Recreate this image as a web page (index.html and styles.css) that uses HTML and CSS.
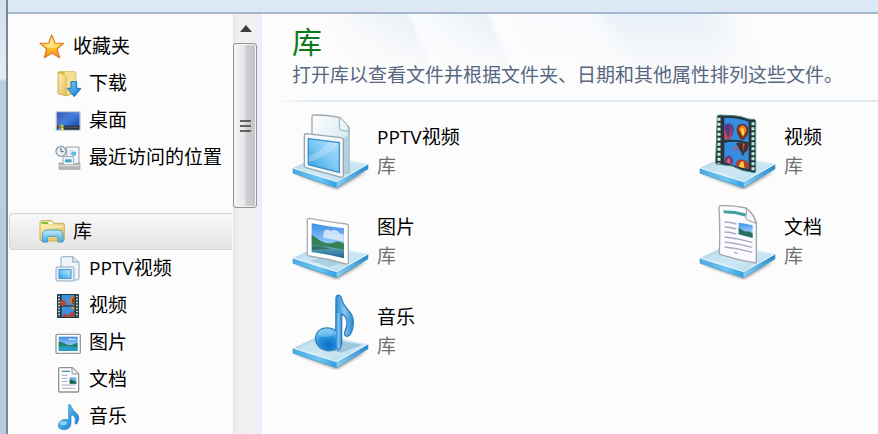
FILE: index.html
```html
<!DOCTYPE html>
<html lang="zh-CN">
<head>
  <meta charset="UTF-8" />
  <meta name="viewport" content="width=device-width, initial-scale=1.0"/>
  <title>库</title>
  <link rel="stylesheet" href="styles.css">
</head>
<body>
  <!-- shared gradients and the library stand -->
  <svg class="defs" aria-hidden="true">
    <defs>
      <linearGradient id="g-star" x1="0" y1="0" x2="0" y2="1"><stop offset="0" stop-color="#ffe58a"/><stop offset=".5" stop-color="#ffc928"/><stop offset="1" stop-color="#f08a1c"/></linearGradient>
      <linearGradient id="g-folder" x1="0" y1="0" x2="1" y2="1"><stop offset="0" stop-color="#fdf2b8"/><stop offset="1" stop-color="#dfbf58"/></linearGradient>
      <linearGradient id="g-blue" x1="0" y1="0" x2="1" y2="1"><stop offset="0" stop-color="#79d0fa"/><stop offset="1" stop-color="#0a78cf"/></linearGradient>
      <linearGradient id="g-desk" x1="0" y1="0" x2="1" y2="1"><stop offset="0" stop-color="#1b3f9c"/><stop offset=".5" stop-color="#3d79dc"/><stop offset="1" stop-color="#16409c"/></linearGradient>
      <linearGradient id="g-arch" x1="0" y1="0" x2="0" y2="1"><stop offset="0" stop-color="#c4ecfb"/><stop offset="1" stop-color="#3fa9e0"/></linearGradient>
      <linearGradient id="g-screen" x1="0" y1="1" x2="1" y2="0"><stop offset="0" stop-color="#2e9ae6"/><stop offset=".5" stop-color="#7cc8f5"/><stop offset="1" stop-color="#b9e3fb"/></linearGradient>
      <linearGradient id="g-sky" x1="0" y1="0" x2="0" y2="1"><stop offset="0" stop-color="#3c8fe8"/><stop offset="1" stop-color="#d7f1fc"/></linearGradient>
      <linearGradient id="g-sea" x1="0" y1="0" x2="0" y2="1"><stop offset="0" stop-color="#69b1bd"/><stop offset="1" stop-color="#20648f"/></linearGradient>
      <linearGradient id="g-page" x1="0" y1="0" x2="1" y2="1"><stop offset="0" stop-color="#ffffff"/><stop offset="1" stop-color="#c5e0ec"/></linearGradient>
      <linearGradient id="g-top" x1="0" y1="0" x2="1" y2="1"><stop offset="0" stop-color="#9cc9e3"/><stop offset=".5" stop-color="#d9edf8"/><stop offset="1" stop-color="#a7d3ec"/></linearGradient>
      <linearGradient id="g-left" x1="0" y1="0" x2="1" y2="0"><stop offset="0" stop-color="#4ba8dc"/><stop offset=".6" stop-color="#71c7f4"/><stop offset="1" stop-color="#2f9fe2"/></linearGradient>
      <linearGradient id="g-right" x1="0" y1="1" x2="1" y2="0"><stop offset="0" stop-color="#8fd2f5"/><stop offset="1" stop-color="#2385c6"/></linearGradient>
      <linearGradient id="g-note" x1="0" y1="0" x2="1" y2="0"><stop offset="0" stop-color="#2b8ad2"/><stop offset=".5" stop-color="#86c9f4"/><stop offset="1" stop-color="#2784cd"/></linearGradient>
      <radialGradient id="g-head" cx=".6" cy=".75" r=".8"><stop offset="0" stop-color="#0b6fc6"/><stop offset=".5" stop-color="#2592df"/><stop offset="1" stop-color="#9cd6f7"/></radialGradient>
      <filter id="f-soft" x="-20%" y="-20%" width="140%" height="140%"><feGaussianBlur stdDeviation="4"/></filter>
      <symbol id="stand" viewBox="0 0 234 234">
        <path d="M8 186 L134 232 L226 178 L134 205Z" fill="#000" opacity=".4" filter="url(#f-soft)"/>
        <path d="M3 169 L134 210 V227 L3 184Z" fill="url(#g-left)"/>
        <path d="M134 210 L228 157 V171 L134 227Z" fill="url(#g-right)"/>
        <path d="M3 168 L88 128 L228 156 L134 209Z" fill="url(#g-top)"/>
        <path d="M20 168 L88 136 L206 158 L133 198Z" fill="#c6e2f1" opacity=".7"/>
        <path d="M3 168 L134 209 L228 156" fill="none" stroke="#e6f6fd" stroke-width="3"/>
        <path d="M3 169 V184 L134 227 L228 171 V157" fill="none" stroke="#4a9bc9" stroke-width="2"/>
      </symbol>
    </defs>
  </svg>

  <div class="window">
    <div class="frame"></div>
    <div class="client">
      <div class="toolbar"></div>
      <div class="panes">
        <nav class="sidebar">
          <div class="group">
            <a class="item" href="#">
              <svg class="icon" viewBox="0 0 78 78"><path d="M38 3 L48 27 L74 28 L54 45 L62 71 L39 57 L16 71 L23 45 L3 28 L29 27Z" fill="url(#g-star)" stroke="#dd7a2c" stroke-width="3.5" stroke-linejoin="round"/><path d="M38 12 L45 31 L62 33 L46 43 L28 41 L13 32 L31 31Z" fill="#fff0a8" opacity=".65"/></svg>
              <span>收藏夹</span>
            </a>
            <a class="item child" href="#">
              <svg class="icon" viewBox="0 0 78 78"><path d="M9 6 Q9 2 13 2 H58 Q63 2 63 7 V66 L34 74 L9 68Z" fill="#d9b956" stroke="#c6a646" stroke-width="2"/><path d="M28 3 H58 Q62 3 62 8 V60 L34 73Z" fill="#f4dd8c"/><path d="M10 5 L31 14 Q34 16 34 20 V75 L10 67Z" fill="url(#g-folder)" stroke="#d0b055" stroke-width="2"/><path d="M48 32 H65 V52 H78 L58 77 L37 52 H48Z" fill="url(#g-blue)" stroke="#1875bf" stroke-width="3" stroke-linejoin="round"/></svg>
              <span>下载</span>
            </a>
            <a class="item child" href="#">
              <svg class="icon" viewBox="0 0 78 78"><rect x="2" y="10" width="75" height="58" fill="#b8bfd0"/><rect x="6" y="13" width="67" height="51" fill="url(#g-desk)"/><path d="M6 13 H73 V18 Q38 20 25 50 H6Z" fill="#7da9ee" opacity=".25"/><rect x="6" y="53" width="67" height="12" fill="#2b333e"/><path d="M29 58 H70" stroke="#6c7480" stroke-width="2"/><path d="M10 54 L17 49 V57 L10 60Z" fill="#f26a35"/><path d="M18 49 L26 52 V59 L18 57Z" fill="#8ed957"/><path d="M10 61 L17 58 V66 L10 67Z" fill="#48b9ff"/><path d="M18 58 L26 60 V67 L18 66Z" fill="#ffd851"/></svg>
              <span>桌面</span>
            </a>
            <a class="item child" href="#">
              <svg class="icon" viewBox="0 0 78 78"><path d="M35 6 H72 V58 H35Z" fill="#f2f7fb" stroke="#98a2aa" stroke-width="3"/><path d="M41 18 H56 M41 26 H50" stroke="#c0cdd8" stroke-width="3"/><rect x="49" y="20" width="14" height="12" fill="#63b7ee"/><path d="M24 35 H56 V60 H24Z" fill="#eef5fa" stroke="#a0a9b0" stroke-width="3"/><rect x="30" y="43" width="20" height="9" fill="#3fa8c7"/><path d="M12 54 H23 L29 61 H57 L64 54 H75 V73 H12Z" fill="#b4b7b9" stroke="#909496" stroke-width="2"/><path d="M13 62 H74" stroke="#e2e3e4" stroke-width="3"/><circle cx="18" cy="19" r="15" fill="#e7eff4" stroke="#8e999f" stroke-width="4"/><path d="M18 9 V20 H26" fill="none" stroke="#4e6470" stroke-width="3"/></svg>
              <span>最近访问的位置</span>
            </a>
          </div>

          <div class="group">
            <a class="item selected" href="#" aria-current="page">
              <svg class="icon" viewBox="0 0 78 78"><path d="M3 12 Q3 5 9 5 H38 L45 13 H70 Q76 13 76 19 V60 Q76 66 70 66 H10 Q3 66 3 59Z" fill="url(#g-folder)" stroke="#cbae55" stroke-width="3"/><path d="M8 12 H28" stroke="#82bf39" stroke-width="6"/><path d="M29 12 H39" stroke="#fff" stroke-width="5"/><path d="M6 23 H73" stroke="#fff6c7" stroke-width="3"/><path d="M10 69 V49 Q11 34 24 33 H58 Q71 34 72 49 V69 H57 V56 Q56 52 52 52 H32 Q27 52 26 56 V69Z" fill="url(#g-arch)" stroke="#4a9cc5" stroke-width="3" stroke-linejoin="round"/></svg>
              <span>库</span>
            </a>
            <a class="item child" href="#">
              <svg class="icon" viewBox="0 0 78 78"><path d="M22 2 H54 L72 18 V66 Q72 72 66 72 H22 Q18 72 18 67 V7 Q18 2 22 2Z" fill="#edf5fb" stroke="#91a8bf" stroke-width="3"/><path d="M53 3 V18 H71" fill="#dceaf5" stroke="#91a8bf" stroke-width="3"/><rect x="3" y="33" width="54" height="42" rx="4" fill="#e2edf6" stroke="#8fa8c1" stroke-width="3"/><rect x="12" y="41" width="36" height="26" fill="url(#g-screen)" stroke="#4b91cd" stroke-width="3"/></svg>
              <span>PPTV视频</span>
            </a>
            <a class="item child" href="#">
              <svg class="icon" viewBox="0 0 78 78"><rect x="6" y="3" width="66" height="72" rx="2" fill="#24373e"/><path d="M12 8 V72 M66 8 V72" stroke="#b1ded6" stroke-width="6" stroke-dasharray="5 4"/><rect x="20" y="6" width="38" height="31" fill="#3d91de"/><rect x="20" y="41" width="38" height="31" fill="#3d91de"/><circle cx="24" cy="30" r="9" fill="#b94638"/><path d="M58 8 Q40 11 43 27 L53 37 H58Z" fill="#cf7539"/><path d="M58 13 Q47 18 52 31 L58 36Z" fill="#74472d"/><path d="M20 72 L29 60 L39 68 L51 55 L58 58 V72Z" fill="#a84b38"/><path d="M48 41 Q50 50 58 52 V41Z" fill="#e08a36"/></svg>
              <span>视频</span>
            </a>
            <a class="item child" href="#">
              <svg class="icon" viewBox="0 0 78 78"><rect x="3" y="13" width="73" height="57" rx="3" fill="#fff" stroke="#969a9e" stroke-width="4"/><rect x="11" y="20" width="57" height="43" fill="url(#g-sky)"/><path d="M11 35 Q22 34 32 42 Q49 48 57 41 L68 39 V52 H11Z" fill="#248266"/><path d="M11 49 Q36 46 68 51 V63 H11Z" fill="#269dc5"/><path d="M40 30 Q45 20 52 28 Q60 22 63 30Z" fill="#fff" opacity=".7"/></svg>
              <span>图片</span>
            </a>
            <a class="item child" href="#">
              <svg class="icon" viewBox="0 0 78 78"><path d="M15 2 H52 L71 20 V71 Q71 75 67 75 H15 Q11 75 11 71 V6 Q11 2 15 2Z" fill="#fff" stroke="#8f9294" stroke-width="4"/><path d="M51 3 V21 H70" fill="#f2f2f2" stroke="#8f9294" stroke-width="3"/><path d="M20 13 H45" stroke="#409a9c" stroke-width="4"/><path d="M20 25 H38 M20 34 H38 M20 43 H38 M20 54 H62 M20 64 H62" stroke="#a9a7cc" stroke-width="3"/><rect x="44" y="31" width="20" height="19" fill="#67b1e5"/><path d="M44 37 L64 45 V50 H44Z" fill="#17644d"/></svg>
              <span>文档</span>
            </a>
            <a class="item child" href="#">
              <svg class="icon" viewBox="0 0 78 78"><path d="M41 2 Q47 0 48 7 Q53 19 65 28 Q77 40 67 57 Q63 64 60 58 Q64 44 57 36 Q53 33 48 33 V57 Q47 77 26 77 Q9 76 10 63 Q12 49 29 46 Q36 45 41 49Z" fill="url(#g-blue)" stroke="#267fbd" stroke-width="2"/><ellipse cx="25" cy="57" rx="11" ry="6" fill="#b9e8ff" opacity=".65"/></svg>
              <span>音乐</span>
            </a>
          </div>
        </nav>

        <div class="scrollbar">
          <button class="scroll-up" type="button" aria-label="向上滚动">
            <svg viewBox="0 0 12 8"><path d="M0 7 L6 0 L12 7Z"/></svg>
          </button>
          <div class="thumb"><i></i><i></i><i></i></div>
        </div>

        <main class="content">
          <header class="header">
            <h1>库</h1>
            <p>打开库以查看文件并根据文件夹、日期和其他属性排列这些文件。</p>
          </header>

          <div class="libraries">
            <a class="library" href="#">
              <svg class="picture" viewBox="0 0 234 234">
                <use href="#stand"/>
                <path d="M62 9 Q100 8 142 16 L171 46 V182 L66 166 Q60 166 60 160 V15 Q60 9 62 9Z" fill="url(#g-page)" stroke="#a2a9ad" stroke-width="4"/>
                <path d="M151 80 L172 68 V180 L151 190Z" fill="#a9cddd" opacity=".8"/>
                <path d="M142 16 V47 Q142 54 149 55 L172 58 Q167 33 142 16Z" fill="#e8f6fc" stroke="#92adb8" stroke-width="3"/>
                <path d="M42 65 L148 77 Q154 78 154 84 V190 Q154 197 148 196 L42 167 Q37 166 37 160 V70 Q37 65 42 65Z" fill="#f4f9fc" stroke="#98a5ae" stroke-width="4"/>
                <path d="M49 80 L142 92 V181 L49 158Z" fill="url(#g-screen)" stroke="#3c8fc7" stroke-width="4"/>
                <path d="M51 132 Q84 120 110 91 L140 94 Q100 140 51 150Z" fill="#d3effd" opacity=".35"/>
              </svg>
              <div><span class="name">PPTV视频</span><span class="type">库</span></div>
            </a>
            <a class="library" href="#">
              <svg class="picture" viewBox="0 0 234 234">
                <use href="#stand"/>
                <path d="M55 11 Q58 8 78 10 Q120 10 145 20 Q155 23 166 22 Q170 23 170 29 V177 Q169 185 161 181 Q128 178 100 162 L53 156 Q49 155 50 148Z" fill="#26363a" stroke="#45857f" stroke-width="3"/>
                <path d="M60 17 V155" stroke="#d5eee7" stroke-width="9" stroke-dasharray="9 6"/>
                <path d="M162 31 V178" stroke="#c1e8df" stroke-width="9" stroke-dasharray="9 6"/>
                <path d="M76 17 Q120 17 149 29 V91 Q116 80 76 83Z" fill="#358de0"/>
                <path d="M76 92 Q119 85 149 98 V170 Q119 167 76 151Z" fill="#358de0"/>
                <path d="M77 39 Q96 26 104 48 Q105 66 91 81 L77 80Z" fill="#553985"/>
                <path d="M77 50 L87 80 L77 82Z M93 39 Q103 52 92 80 L87 80 Q99 56 93 39Z" fill="#ec3f37"/>
                <path d="M113 52 Q115 36 130 35 Q147 37 149 54 Q148 69 135 83 H126 Q112 67 113 52Z" fill="#6d3528"/>
                <path d="M119 52 Q124 38 134 41 Q145 48 141 60 L132 75Z" fill="#f48429"/>
                <path d="M127 48 Q136 47 135 65 L129 71Z" fill="#ffe04c"/>
                <path d="M111 94 Q128 87 149 98 Q148 115 136 123 L132 133 L126 121Z" fill="#47302f"/>
                <path d="M131 94 L137 95 L134 118Z" fill="#d95b2a"/>
                <circle cx="111" cy="110" r="5" fill="#e34342"/>
                <path d="M77 151 Q77 132 89 130 Q101 132 102 149 L99 159Z" fill="#653c82"/>
                <path d="M83 151 Q85 137 91 138 L95 156Z" fill="#fa594b"/>
                <path d="M109 160 Q112 143 126 142 Q144 143 149 158 V170 Q127 169 109 160Z" fill="#a83e2d"/>
                <path d="M120 164 Q123 147 133 148 L137 169Z" fill="#ffc544"/>
              </svg>
              <div><span class="name">视频</span><span class="type">库</span></div>
            </a>
            <a class="library" href="#">
              <svg class="picture" viewBox="0 0 234 234">
                <use href="#stand"/>
                <path d="M55 176 L112 194 L151 184 L94 166Z" fill="#89bcd5" opacity=".5"/>
                <path d="M52 49 Q110 60 163 66 Q169 67 169 73 V180 Q169 188 162 186 Q108 170 51 162 Q46 162 46 155 V55 Q46 49 52 49Z" fill="#fff" stroke="#a9adb0" stroke-width="4"/>
                <path d="M59 64 Q106 74 156 79 V169 Q106 156 59 150Z" fill="url(#g-sky)"/>
                <path d="M94 91 Q101 77 116 87 Q133 78 143 94 Q151 99 155 95 V118 L94 107Z" fill="#fff" opacity=".65"/>
                <path d="M59 98 Q72 106 85 116 Q105 127 122 123 Q137 113 156 125 V143 L59 131Z" fill="#348257"/>
                <path d="M59 129 Q103 133 156 143 V169 Q106 156 59 150Z" fill="url(#g-sea)"/>
                <path d="M60 130 Q103 133 115 142 Q85 141 60 144Z" fill="#2a6650" opacity=".75"/>
              </svg>
              <div><span class="name">图片</span><span class="type">库</span></div>
            </a>
            <a class="library" href="#">
              <svg class="picture" viewBox="0 0 234 234">
                <use href="#stand"/>
                <path d="M64 11 Q100 9 141 18 Q166 36 172 63 V175 Q173 184 165 182 Q116 174 65 158 Q60 157 61 149 Q64 80 60 19 Q60 13 64 11Z" fill="#fbfcff" stroke="#a3a5a6" stroke-width="4"/>
                <path d="M141 18 Q145 28 140 45 Q139 55 150 56 L171 64 Q165 37 141 18Z" fill="#f5f6f7" stroke="#979b9b" stroke-width="3"/>
                <path d="M74 29 Q108 29 140 39" fill="none" stroke="#429fa2" stroke-width="9"/>
                <path d="M77 60 Q94 60 112 66 M77 75 Q94 75 112 81 M77 90 Q94 90 112 96 M77 105 Q118 109 160 121 M77 120 Q118 124 160 136 M77 135 Q118 139 160 151 M105 151 L116 154" fill="none" stroke="#aaa8c5" stroke-width="4"/>
                <path d="M119 62 Q140 64 161 70 V108 Q140 104 119 97Z" fill="url(#g-sky)"/>
                <path d="M119 76 Q134 91 149 88 L161 94 V108 L119 97Z" fill="#286f61"/>
              </svg>
              <div><span class="name">文档</span><span class="type">库</span></div>
            </a>
            <a class="library" href="#">
              <svg class="picture" viewBox="0 0 234 234">
                <use href="#stand"/>
                <path d="M109 173 L153 147 L211 158 L149 182Z" fill="#478cb5" opacity=".35"/>
                <path d="M132 17 Q134 8 142 10 Q148 12 149 21 Q153 38 170 56 Q190 77 182 109 Q177 131 165 133 Q156 132 158 121 Q172 90 159 73 Q154 67 149 66 V150 Q148 168 139 175 L131 160Z" fill="url(#g-note)" stroke="#3180bd" stroke-width="4"/>
                <ellipse cx="108" cy="142" rx="38" ry="34" transform="rotate(20 108 142)" fill="url(#g-head)" stroke="#3b88bd" stroke-width="4"/>
                <path d="M132 64 H148 V150 Q148 167 139 173 L132 160Z" fill="url(#g-note)"/>
                <ellipse cx="101" cy="125" rx="22" ry="11" fill="#b7e4fd" opacity=".35"/>
              </svg>
              <div><span class="name">音乐</span><span class="type">库</span></div>
            </a>
          </div>
        </main>
      </div>
    </div>
  </div>
</body>
</html>
```

FILE: styles.css
```css
* {
  box-sizing: border-box;
}

body {
  margin: 0;
  font-family: "Open Sans", "Noto Sans CJK SC", sans-serif;
  font-size: 19px;
  line-height: 29px;
  color: #000;
  background: #fcfcfc;
}

a {
  color: inherit;
  text-decoration: none;
}

.defs {
  position: absolute;
  width: 0;
  height: 0;
}

.window {
  display: flex;
  height: 100vh;
  overflow: hidden;
}

.frame {
  width: 8px;
  flex-shrink: 0;
  background: linear-gradient(#d3dfec, #e6edf5 78px, #bccde0 82px, #b9cbdf);
  border-right: 2px solid #78879a;
}

.client {
  flex: 1;
  min-width: 0;
  display: flex;
  flex-direction: column;
}

.toolbar {
  height: 14px;
  flex-shrink: 0;
  background: #dce8f5;
  border-bottom: 2px solid #a6b6cc;
}

.panes {
  flex: 1;
  min-height: 0;
  display: flex;
}

/* navigation tree */
.sidebar {
  width: 225px;
  flex-shrink: 0;
  padding: 14px 1px 0;
  overflow: hidden;
}

.group {
  margin-bottom: 37px;
}

.item {
  display: flex;
  align-items: center;
  gap: 8px;
  height: 37px;
  padding-left: 30px;
  white-space: nowrap;
}

.item.child {
  padding-left: 46px;
}

.item.selected {
  padding-left: 29px;
  border: 1px solid #d6d6d6;
  border-right: 0;
  border-radius: 4px 0 0 4px;
  background: linear-gradient(#f8f8f8, #e4e4e4);
}

.icon {
  width: 26px;
  height: 26px;
  flex-shrink: 0;
}

/* scrollbar */
.scrollbar {
  width: 25px;
  flex-shrink: 0;
  background: linear-gradient(to right, #e6e6e6, #f0f0f0 4px, #f1f1f1);
}

.scroll-up {
  display: flex;
  align-items: center;
  justify-content: center;
  width: 100%;
  height: 29px;
  padding: 0;
  border: 0;
  background: none;
}

.scroll-up svg {
  width: 12px;
  height: 8px;
  fill: #3c3c3c;
}

.thumb {
  display: flex;
  flex-direction: column;
  align-items: center;
  justify-content: center;
  gap: 3px;
  height: 165px;
  margin-right: 1px;
  border: 1px solid #929292;
  border-radius: 3px;
  background: linear-gradient(to right, #f5f5f5, #e6e6e8 48%, #cfcfd3 55%, #c4c4c8);
  box-shadow: inset 0 0 0 1px #f4f4f4;
}

.thumb i {
  width: 11px;
  height: 2px;
  background: #606060;
}

/* library view */
.content {
  flex: 1;
  min-width: 0;
  border-left: 4px solid #e9f0f9;
}

.header {
  height: 88px;
  padding: 10px 0 0 30px;
  background:
    linear-gradient(to right, #fcfcfc 14px, #dfe9f5 50px) bottom / 100% 2px no-repeat,
    linear-gradient(to bottom, transparent, #fcfcfc 64px),
    linear-gradient(65deg, #fcfcfc 15%, #eaf0f8 28%, #fafcfe 29%, #eaf0f8 40%, #fafcfe 41%, #f8fafd 56%, #e8eff8 60%, #e8eff8 72%, #fcfcfd 80%);
}

.header h1 {
  margin: 0;
  font-size: 30px;
  font-weight: 400;
  line-height: 36px;
  color: #0d7a1e;
}

.header p {
  margin: 0;
  line-height: 31px;
  color: #56677f;
  white-space: nowrap;
}

.libraries {
  display: grid;
  grid-template-columns: 407px 1fr;
  grid-auto-rows: 90px;
  padding: 10px 0 0 30px;
}

.library {
  display: flex;
  align-items: flex-start;
  gap: 7px;
}

.library .picture {
  width: 78px;
  height: 78px;
  flex-shrink: 0;
}

.library div {
  padding-top: 11px;
}

.name,
.type {
  display: block;
}

.type {
  color: #707070;
}
```
